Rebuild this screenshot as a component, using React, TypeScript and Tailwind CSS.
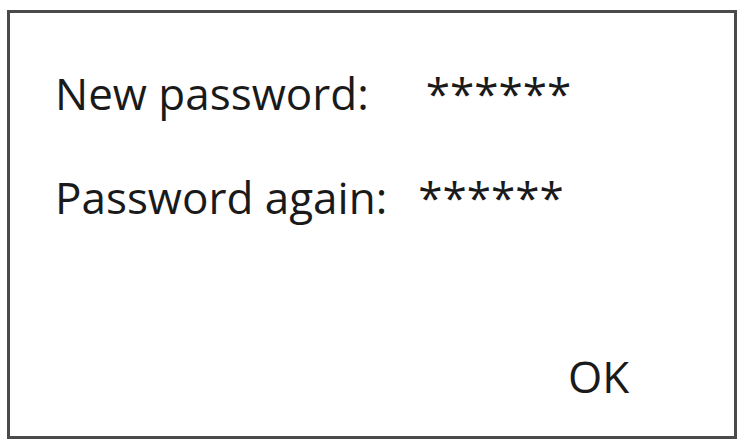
export default function App() {
  return (
    <div className="w-[742px] h-[446px] bg-white pt-[10px] pl-[7px] font-['Open_Sans',sans-serif] text-[#1a1a1a]">
      <div className="w-[730px] h-[429px] border-[3px] border-[#4a4a4a] pt-[56px] pl-[45px] flex flex-col">
        {/* Campo 1 */}
        <div className="flex items-baseline h-[48px] text-[44px] leading-[48px]">
          <span>New password:</span>
          <span className="ml-[57px]">******</span>
        </div>
        {/* Campo 2 */}
        <div className="flex items-baseline h-[48px] mt-[56px] text-[44px] leading-[48px]">
          <span>Password again:</span>
          <span className="ml-[31px]">******</span>
        </div>
        <div className="mt-[131px] pl-[513px] text-[44px] leading-[48px]">OK</div>
      </div>
    </div>
  );
}
